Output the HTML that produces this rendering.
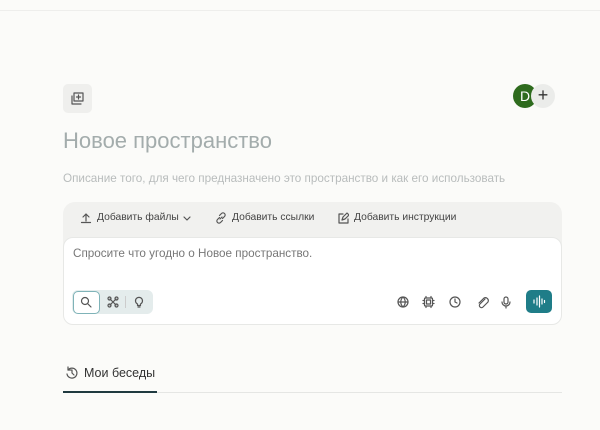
<!DOCTYPE html>
<html><head><meta charset="utf-8"><style>
body{margin:0;width:600px;height:430px;background:#fbfbf9;font-family:"Liberation Sans","DejaVu Sans",sans-serif;position:relative;overflow:hidden}
.a{position:absolute}
.ic{stroke:#555;fill:none;stroke-width:1.2;stroke-linecap:round;stroke-linejoin:round}
.t{font-size:10.3px;color:#444;white-space:nowrap}
</style></head><body>
<div class="a" style="left:0;top:10px;width:600px;height:1px;background:#eeeeec"></div>
<div class="a" style="left:63px;top:84px;width:29px;height:29px;background:#efefed;border-radius:5px"></div>
<svg class="a" style="left:69px;top:90px" width="17" height="17" viewBox="0 0 17 17"><g class="ic" stroke="#333"><rect x="5" y="3" width="9" height="8"/><path d="M3 6v8h9"/><path d="M9.5 5v4M7.5 7h4"/></g></svg>
<div class="a" style="left:513px;top:84px;width:24px;height:24px;border-radius:50%;background:#2e6b1e;color:#fff;font-size:14px;line-height:24px;text-align:center">D</div>
<div class="a" style="left:531px;top:84px;width:24px;height:24px;border-radius:50%;background:#ebecea;color:#333;font-size:18px;line-height:23px;text-align:center">+</div>
<div class="a" style="left:63px;top:128px;font-size:22px;color:#a3acac">Новое пространство</div>
<div class="a" style="left:63px;top:172px;font-size:11.7px;color:#b8bcbc;white-space:nowrap">Описание того, для чего предназначено это пространство и как его использовать</div>
<div class="a" style="left:63px;top:202px;width:499px;height:122px;background:#f1f1ef;border-radius:12px"></div>
<svg class="a" style="left:80px;top:212px" width="12" height="12"><g class="ic"><path d="M6 9V2M3 5l3-3 3 3M1.5 10.5h9"/></g></svg>
<div class="a t" style="left:97px;top:212px">Добавить файлы</div>
<svg class="a" style="left:183px;top:216px" width="8" height="6"><path class="ic" d="M1 1l3 3 3-3"/></svg>
<svg class="a" style="left:215px;top:212px" width="12" height="12"><g class="ic"><path d="M5 7l2-2M4.5 5.5l-2 2a2 2 0 003 3l2-2M7.5 6.5l2-2a2 2 0 00-3-3l-2 2"/></g></svg>
<div class="a t" style="left:232px;top:212px">Добавить ссылки</div>
<svg class="a" style="left:337px;top:212px" width="12" height="12"><g class="ic"><path d="M6 2H2v9h9V7"/><path d="M5 8l1-3 4-4 2 2-4 4z"/></g></svg>
<div class="a t" style="left:354px;top:212px">Добавить инструкции</div>
<div class="a" style="left:63px;top:237px;width:497px;height:86px;background:#fff;border:1px solid #e7e8e6;border-radius:10px"></div>
<div class="a" style="left:73px;top:247px;font-size:11.7px;color:#777">Спросите что угодно о Новое пространство.</div>
<div class="a" style="left:72px;top:290px;width:81px;height:24px;background:#e4ecec;border-radius:6px"></div>
<div class="a" style="left:73px;top:291px;width:25px;height:21px;background:#fff;border:1px solid #7fb3b8;border-radius:5px"></div>
<svg class="a" style="left:80px;top:296px" width="12" height="12"><g class="ic" stroke="#267d86"><circle cx="5" cy="5" r="3.5"/><path d="M8 8l3 3"/></g></svg>
<svg class="a" style="left:107px;top:296px" width="12" height="12"><g class="ic"><path d="M3 3l6 6M9 3l-6 6"/><circle cx="2.5" cy="2.5" r="1.5"/><circle cx="9.5" cy="2.5" r="1.5"/><circle cx="2.5" cy="9.5" r="1.5"/><circle cx="9.5" cy="9.5" r="1.5"/></g></svg>
<div class="a" style="left:125px;top:296px;width:1px;height:12px;background:#ccc"></div>
<svg class="a" style="left:133px;top:296px" width="12" height="12"><g class="ic"><path d="M4.5 8a3.5 3.5 0 113 0v1.5h-3z M5 11h2"/></g></svg>
<svg class="a" style="left:396px;top:295px" width="130" height="14"><g class="ic"><circle cx="7" cy="7" r="5"/><path d="M2 7h10M7 2c-3 3-3 7 0 10M7 2c3 3 3 7 0 10"/><rect x="28.5" y="3" width="8" height="8" rx="1"/><rect x="30.5" y="5" width="4" height="4"/><path d="M30 1.5v1.5M35 1.5v1.5M30 11v1.5M35 11v1.5M27 5.5h1.5M27 8.5h1.5M36.5 5.5h1.5M36.5 8.5h1.5"/><circle cx="59" cy="7" r="5"/><path d="M59 4v3l2 1"/><path d="M89 4l-5 5a2 2 0 003 3l5-5a3 3 0 00-4-4l-5 5"/><rect x="108" y="2" width="4" height="7" rx="2"/><path d="M106 7a4 4 0 008 0M110 11v2"/></g></svg>
<div class="a" style="left:526px;top:290px;width:26px;height:23px;background:#1f7d88;border-radius:5px"></div>
<svg class="a" style="left:532px;top:294px" width="14" height="15"><g stroke="#fff" stroke-width="1.2" stroke-linecap="round"><path d="M2 6v3M5 4v7M7.5 2v11M10 5v5M12.5 6.5v2"/></g></svg>
<svg class="a" style="left:65px;top:366px" width="14" height="14"><g class="ic" stroke="#222" stroke-width="1.4"><path d="M3 4a5 5 0 11-1 4"/><path d="M3 1v3h3M7 4v3l2 2"/></g></svg>
<div class="a" style="left:84px;top:366px;font-size:12.5px;color:#333">Мои беседы</div>
<div class="a" style="left:63px;top:392px;width:499px;height:1px;background:#e5e6e4"></div>
<div class="a" style="left:63px;top:391px;width:94px;height:2px;background:#1f3a40"></div>
</body></html>
